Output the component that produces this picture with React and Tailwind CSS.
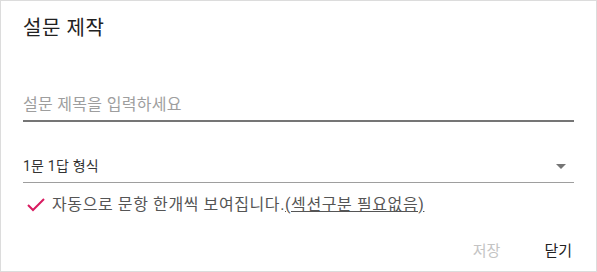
import React from "react";

export default function App() {
  const font = { fontFamily: 'Roboto, "Noto Sans CJK KR", sans-serif' };
  return (
    <div
      className="w-[597px] h-[272px] bg-white border border-[#dcdcdc] flex flex-col px-[22px]"
      style={font}
    >
      <div className="mt-[13px] h-[28px] leading-[28px] text-[20px] text-[#212121] tracking-[0.6px]">설문 제작</div>
      <div className="mt-[48px] h-[32px] border-b-2 border-[#757575] flex items-center">
        <span className="text-[16px] text-[#9e9e9e] tracking-[0.3px]">설문 제목을 입력하세요</span>
      </div>
      <div className="mt-[29px] h-[32px] border-b border-[#9e9e9e] flex items-center justify-between">
        <span className="text-[14px] text-[#333] tracking-[0.2px]">1문 1답 형식</span>
        <svg width="10" height="5" viewBox="0 0 10 5" className="mr-[8px]">
          <path d="M0 0 L10 0 L5 5 Z" fill="#757575" />
        </svg>
      </div>
      <div className="mt-[10px] h-[24px] flex items-center">
        <svg width="18" height="14" viewBox="0 0 18 14" className="ml-[4px] mr-[7px]">
          <path d="M1 7 L6 12 L17 1" fill="none" stroke="#d81b60" strokeWidth="2" />
        </svg>
        <span className="text-[16px] text-[#555] tracking-[0.6px]">
          자동으로 문항 한개씩 보여집니다.<span className="underline">(섹션구분 필요없음)</span>
        </span>
      </div>
      <div className="mt-[16px] h-[36px] flex items-center justify-end">
        <button className="text-[15px] text-[#c4c4c4] px-[2px] mr-[40px]">저장</button>
        <button className="text-[15px] text-[#222] px-[2px]">닫기</button>
      </div>
    </div>
  );
}
